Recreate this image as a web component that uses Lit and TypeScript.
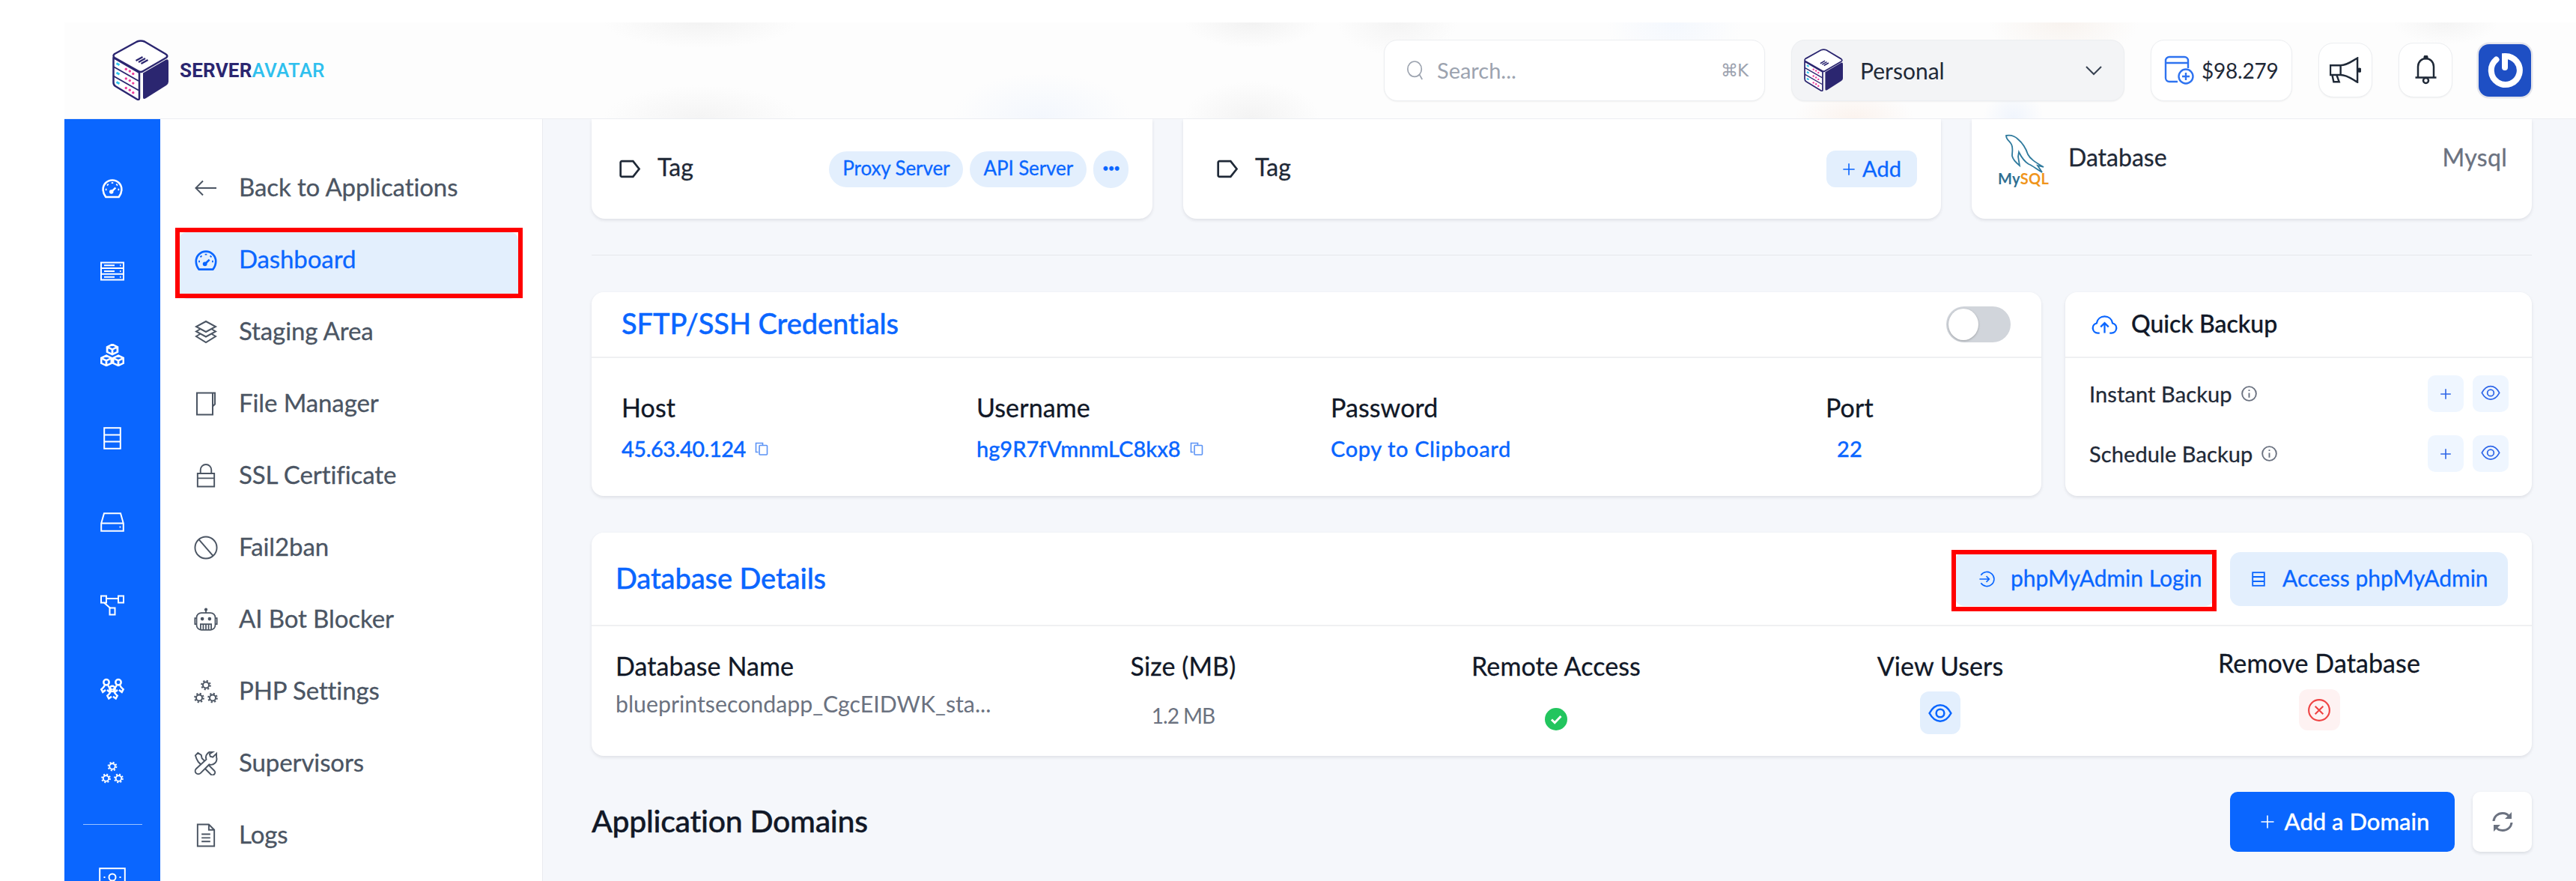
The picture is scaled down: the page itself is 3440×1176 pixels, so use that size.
import { LitElement, html, css, svg, TemplateResult } from "lit";
import { customElement } from "lit/decorators.js";

const hexCube = (c: number, y: number) => svg`
  <path d="M${c} ${y - 5.6}l5 2.8v5.6l-5 2.8-5-2.8v-5.6zM${c - 5} ${y - 2.8}l5 2.8 5-2.8M${c} ${y}v5.6"/>`;

const gear = (x: number, y: number) => svg`
  <circle cx=${x} cy=${y} r="4"/>
  <circle cx=${x} cy=${y} r="5.800" stroke-dasharray="2.200 2.350" stroke-width="2"/>`;

const person = (x: number, y: number) => svg`
  <circle cx=${x} cy=${y} r="3"/>
  <path d="M${x - 2} ${y + 3}c0 2-1.400 2.600-3.400 4.600l1.600 3 3-2.200M${x + 2} ${y + 3}c0 2 1.400 2.600 3.400 4.600l-1.600 3-3-2.200"/>`;

const icons: Record<string, TemplateResult> = {
  gauge: html`<svg viewBox="0 0 24 24" stroke-width="2.200"><path d="M5 21.500h14c1.800-2.200 2.900-5 2.900-8.100A9.900 9.900 0 0 0 2.100 13.400c0 3.100 1.100 5.900 2.900 8.100z"/><path d="M12 5.800v1.400M6.600 8l1 1M17.400 8l-1 1M4.600 13.500H6M18 13.500h1.400M11.500 15.500l4-3.800"/><circle cx="11" cy="16" r="1.200" fill="currentColor"/></svg>`,
  servers: html`<svg viewBox="0 0 32 25"><rect x="1" y="1" width="30" height="23"/><path d="M1 8.600h30M1 16.300h30M5 4.800h14M5 12.400h14M5 20.200h14M26 4.800h1.500M26 12.400h1.500M26 20.200h1.500"/></svg>`,
  cubes: html`<svg viewBox="0.400 0.800 23.200 25" preserveAspectRatio="none" stroke-width="1.500">${hexCube(12, 7)}${hexCube(6.200, 19.400)}${hexCube(17.800, 19.400)}</svg>`,
  rows: html`<svg viewBox="0 0 24 30"><rect x="1.200" y="1.200" width="21.600" height="27.600"/><path d="M1.200 10.400h21.600M1.200 19.600h21.600"/></svg>`,
  drive: html`<svg viewBox="0 0 32 26"><path d="M1.200 14.600 5 1.200h22l3.800 13.400v10.200H1.200zM1.200 14.600h29.600M25.600 19.600h1.600"/></svg>`,
  network: html`<svg viewBox="0 0 32 27"><rect x="1" y="1" width="7" height="9"/><rect x="24" y="1" width="7" height="9"/><rect x="12.500" y="17" width="7" height="9"/><path d="M8 4.500h16M5 10l8.500 7.500"/></svg>`,
  users: html`<svg viewBox="4 0 26 23" stroke-width="1.500">${person(10.500, 4)}${person(23.500, 4)}${person(17, 11)}</svg>`,
  gears: html`<svg viewBox="0 0 32 32" stroke-width="1.700">${gear(16, 7.500)}${gear(7, 24.500)}${gear(25, 24.500)}</svg>`,
  money: html`<svg viewBox="0 0 36 26"><rect x="1.200" y="1.200" width="33.600" height="23.600"/><circle cx="18" cy="13" r="4.500"/><path d="M6.500 13h2M27.500 13h2"/></svg>`,
  back: html`<svg viewBox="0 0 32 24"><path d="M30 12H3M12 2.500 2.500 12l9.500 9.500"/></svg>`,
  layers: html`<svg viewBox="0 0 32 32"><path d="M16 2 29 9l-13 7L3 9zM8 12.500 3 15.500l13 7 13-7-5-3M8 19l-5 3 13 8 13-8-5-3"/></svg>`,
  file: html`<svg viewBox="0 0 28 32"><path d="M2 1.500h24v15l-3 3v11H2zM23 1.500v18"/></svg>`,
  lock: html`<svg viewBox="0 0 26 33"><path d="M1.500 13.500h23v18h-23zM1.500 20h23M5.500 13.500V8.500a7.500 7.500 0 0 1 15 0v5"/></svg>`,
  ban: html`<svg viewBox="0 0 33 33"><circle cx="16.500" cy="16.500" r="15"/><path d="m7 5.500 19 22"/></svg>`,
  robot: html`<svg viewBox="0 0 36 34"><circle cx="18" cy="2" r="1.400" fill="currentColor"/><path d="M18 3v4M4 15H1.500v9H4M32 15h2.500v9H32"/><rect x="4" y="7" width="28" height="25.500" rx="7"/><circle cx="12.500" cy="16" r="1.600" fill="currentColor"/><circle cx="23.500" cy="16" r="1.600" fill="currentColor"/><path d="M10 32.500V24h16v8.500M14 24v8M18 24v8M22 24v8"/></svg>`,
  tools: html`<svg viewBox="0 0 33 33"><path d="M2 5.500 5.500 2l4.500 3 1 4.500 17 17a3.500 3.500 0 0 1-5 5l-17-17L3.500 10z"/><path d="m31 3-5 5-3.500-1-1-3.500 5-3a8 8 0 0 0-9.500 10.500L3 24a4.200 4.200 0 0 0 6 6l12-12a8 8 0 0 0 10-10z" fill="#fff"/></svg>`,
  doc: html`<svg viewBox="0 0 26 33"><path d="M1.500 1.500H17l7.500 7.500v22.500h-23zM17 1.500V9h7.500M7 15h12M7 20h12M7 25h12"/></svg>`,
  search: html`<svg viewBox="0 0 26 30"><ellipse cx="12" cy="13" rx="10" ry="11"/><path d="m19 21 4 7"/></svg>`,
  chevron: html`<svg viewBox="0 0 24 14"><path d="m2 2 10 10L22 2"/></svg>`,
  wallet: html`<svg viewBox="0 0 40 40"><path d="M18 35H7a5 5 0 0 1-5-5V7a5 5 0 0 1 5-5h20a5 5 0 0 1 5 5v10M2 10h30"/><circle cx="29" cy="28" r="9.500"/><path d="M29 23v10M24 28h10"/></svg>`,
  mega: html`<svg viewBox="0 0 43 36"><path d="M1 11.500h14v13H1zM15 11.500c9 0 15-5.500 23-10v33c-8-4.500-14-10-23-10M3.500 24.500l2 9.500h7.500l-3.500-9.500"/><circle cx="40.500" cy="18" r="2" fill="currentColor"/></svg>`,
  bell: html`<svg viewBox="0 0 31 39"><path d="M5 29.500V15a10.500 11 0 0 1 21 0v14.500M1.500 29.500h28"/><circle cx="15.500" cy="33.500" r="3.500"/><circle cx="15.500" cy="2.500" r="1.800" fill="currentColor"/></svg>`,
  tag: html`<svg viewBox="0 0 30 26"><path d="M3.500 2.200H19l8.500 10.800L19 23.800H3.500A1.800 1.800 0 0 1 1.700 22V4a1.800 1.800 0 0 1 1.800-1.800z"/></svg>`,
  copy: html`<svg viewBox="0 0 18 18"><path d="M4.500 13.500H1.500v-12h9v2.500"/><rect x="6" y="4.500" width="10.500" height="12.500" rx="1"/></svg>`,
  info: html`<svg viewBox="0 0 22 22"><circle cx="11" cy="11" r="9.800"/><path d="M11 10v6.500M11 5.500v1.800"/></svg>`,
  plus: html`<svg viewBox="0 0 20 20"><path d="M10 1.500v17M1.500 10h17"/></svg>`,
  eye: html`<svg viewBox="0 0 30 24"><path d="M1.500 12C5 5.500 9.500 2 15 2s10 3.500 13.500 10C25 18.500 20.500 22 15 22S5 18.500 1.500 12z"/><circle cx="15" cy="12" r="5"/></svg>`,
  cloud: html`<svg viewBox="0 0 36 26"><path d="M11 24.500H8.500a7 7 0 0 1-1.500-13.800C8 5 12.500 1.500 18 1.500c5.500 0 10 3.500 11 9.200a7 7 0 0 1-1.500 13.800H25M18 24.500V11M12.500 16l5.500-5.500 5.500 5.500"/></svg>`,
  login: html`<svg viewBox="0 0 24 24"><path d="M3.500 6.500a10 10 0 1 1 0 11M1.500 12H15M11 8l4 4-4 4"/></svg>`,
  stack: html`<svg viewBox="0 0 18 20"><rect x="1.200" y="1.200" width="15.600" height="17.600"/><path d="M1.200 7h15.600M1.200 13h15.600"/></svg>`,
  xcircle: html`<svg viewBox="0 0 30 30"><circle cx="15" cy="15" r="13"/><path d="m10 10 10 10M20 10 10 20"/></svg>`,
  check: html`<svg viewBox="0 0 30 30"><circle class="fill" cx="15" cy="15" r="15"/><path class="tick" d="m9 15.500 4.200 4.200L21.500 11"/></svg>`,
  refresh: html`<svg viewBox="0 0 30 28"><path d="M3 13C3.500 7 8.500 2.500 15 2.500c4 0 7 1.500 9 4.500M27 15c-.5 6-5.500 10.500-12 10.500-4 0-7-1.500-9-4.500"/><path class="solid" d="M27 1v9h-9zM3 27v-9h9z"/></svg>`,
};

const cube = (compact = false) => html`
  <svg class=${compact ? "cube small" : "cube"} viewBox="0 0 75 81" preserveAspectRatio="none">
    <path d="M41 44.500 71 27q4-2 4 2v27q0 3-3 5L45 78q-4 2.500-4-1z" fill="#2b2670"/>
    <path d="M33 2.500q5-2 10 0L71 19q4 2.500 1 5L41 42q-3 2-6 0L3 24q-3-2.500 0-5z" fill="#fff" stroke="#2b2670" stroke-width="2.500" stroke-linejoin="round"/>
    <path d="M1.500 24 36 44v34q0 3-3 1.500L4 62q-2.500-1.500-2.500-5z" fill="#fff" stroke="#2b2670" stroke-width="2.500" stroke-linejoin="round"/>
    <path d="M1.500 36 35 55M1.500 48.500 35 67.500" stroke="#2b2670" stroke-width="2"/>
    <path d="m35 30 9-5M38.500 32l9-5M31.500 28l9-5" stroke="#2b2670" stroke-width="2.200"/>
    <path d="m5.500 31.500 4 2.200M5.500 44l4 2.200M5.500 56.500l4 2.200" stroke="#2fc4ee" stroke-width="3"/>
    <g fill="#ee3f9b">
      <circle cx="18.300" cy="39.300" r="1.700"/><circle cx="23.300" cy="42" r="1.700"/><circle cx="27.800" cy="45.500" r="1.700"/>
      <circle cx="18.300" cy="51.900" r="1.700"/><circle cx="23.300" cy="54.600" r="1.700"/><circle cx="27.800" cy="58.100" r="1.700"/>
      <circle cx="18.300" cy="64.500" r="1.700"/><circle cx="23.300" cy="67.200" r="1.700"/><circle cx="27.800" cy="70.700" r="1.700"/>
    </g>
  </svg>`;

const nav = [
  ["back", "Back to Applications"],
  ["gauge", "Dashboard"],
  ["layers", "Staging Area"],
  ["file", "File Manager"],
  ["lock", "SSL Certificate"],
  ["ban", "Fail2ban"],
  ["robot", "AI Bot Blocker"],
  ["gears", "PHP Settings"],
  ["tools", "Supervisors"],
  ["doc", "Logs"],
];

const rail = ["gauge", "servers", "cubes", "rows", "drive", "network", "users", "gears"];

@customElement("app-root")
export class AppRoot extends LitElement {
  static styles = css`
    :host {
      display: block;
      height: 1176px;
      overflow: hidden;
      background: #fff;
      font-family: "Lato", "Noto Sans", sans-serif;
      color: #111827;
    }
    svg { display: block; fill: none; stroke: currentColor; stroke-width: 2; }
    .page { display: flex; flex-direction: column; height: 1146px; margin: 30px 0 0 86px; }

    .header {
      flex: none;
      box-sizing: border-box;
      height: 129px;
      display: flex;
      align-items: center;
      padding: 0 60px 1px 64px;
      border-bottom: 1px solid #eceef2;
      background:
        radial-gradient(ellipse 130px 34px at 849px 0, #f3f3f3, transparent),
        radial-gradient(ellipse 130px 44px at 849px 128px, #f4f4f4, transparent),
        radial-gradient(ellipse 120px 60px at 1305px 128px, #f3f7fd, transparent),
        radial-gradient(ellipse 90px 34px at 1586px 0, #f2f2f2, transparent),
        radial-gradient(ellipse 90px 50px at 1586px 128px, #f3f3f3, transparent),
        radial-gradient(ellipse 80px 44px at 1780px 0, #f4f4f4, transparent),
        radial-gradient(ellipse 90px 70px at 2150px 0, #f4f8fe, transparent),
        radial-gradient(ellipse 100px 50px at 2670px 0, #f8f3ef, transparent),
        radial-gradient(ellipse 80px 40px at 2390px 128px, #fbf3ee, transparent),
        radial-gradient(ellipse 40px 40px at 2603px 128px, #f0f5fd, transparent),
        radial-gradient(ellipse 70px 30px at 3180px 0, #f4f4f4, transparent),
        #fdfdfd;
    }
    .brand { display: flex; align-items: center; gap: 15px; }
    .cube { width: 75px; height: 81px; stroke: none; flex: none; }
    .cube.small { width: 52px; height: 57px; }
    .word { font-family: "Roboto", sans-serif; font-size: 26px; font-weight: 700; color: #2b2670; letter-spacing: 0.200px; }
    .word span { color: #2fc0ee; font-weight: 500; }
    .tools { margin-left: auto; display: flex; align-items: center; gap: 35px; }
    .box {
      box-sizing: border-box;
      height: 82px;
      display: flex;
      align-items: center;
      background: #fff;
      border: 1px solid #eceef1;
      border-radius: 18px;
      box-shadow: 0 1px 2px rgba(0, 0, 0, 0.05);
    }
    .search { width: 509px; padding: 0 22px 0 29px; color: #9ca3af; font-size: 29px; }
    .search svg { width: 24px; height: 30px; stroke-width: 1.800; margin-right: 17px; }
    .search span:last-child { margin-left: auto; font-size: 23px; font-family: "DejaVu Sans", sans-serif; letter-spacing: -1px; }
    .personal { width: 445px; padding: 0 28px 0 16px; background: #f3f4f6; font-size: 30px; color: #1f2937; }
    .personal .cube { margin-right: 23px; }
    .personal .chev { width: 24px; height: 14px; margin-left: auto; color: #374151; }
    .balance { width: 189px; padding-left: 17px; font-size: 28px; color: #1f2937; gap: 10px; letter-spacing: -0.200px; }
    .balance svg { width: 40px; height: 40px; color: #2f73f0; flex: none; stroke-width: 2.400; }
    .square { width: 72px; height: 73px; justify-content: center; color: #1f2937; border-radius: 20px; }
    .square .mega { width: 42px; height: 36px; }
    .square .bell { width: 31px; height: 39px; }
    .square svg { stroke-width: 2.500; }
    .avatar {
      box-sizing: border-box;
      width: 70px;
      height: 70px;
      border-radius: 14px;
      background: #1e4fc4;
      box-shadow: 0 0 0 2.500px #e4e5ec;
      display: flex;
      align-items: center;
      justify-content: center;
      color: #fff;
    }
    .avatar svg { width: 48px; height: 48px; stroke-width: 8; stroke-linecap: round; }

    .body { flex: 1; display: flex; min-height: 0; }
    .rail {
      flex: none;
      width: 128px;
      padding-top: 36px;
      background: #0a66ff;
      color: #fff;
      display: flex;
      flex-direction: column;
      align-items: center;
      overflow: hidden;
    }
    .cell { flex: none; height: 111.500px; display: flex; align-items: center; justify-content: center; }
    .cell svg { width: 32px; height: 30px; }
    .rail .sep { flex: none; width: 79px; height: 1px; margin-top: 13px; background: #9cc2ff; }
    .rail .money { flex: none; width: 36px; height: 26px; margin-top: 57px; }

    .menu { flex: none; box-sizing: border-box; width: 511px; padding-top: 44px; background: #fff; border-right: 1px solid #e9ebef; }
    .row { position: relative; height: 96px; display: flex; align-items: center; padding-left: 45px; gap: 28px; color: #4b5563; font-size: 33px; letter-spacing: -0.100px; -webkit-text-stroke: 0.300px currentColor; }
    .row svg, .row span { position: relative; }
    .row span { margin-bottom: 4px; }
    .row svg { width: 32px; height: 32px; flex: none; }
    .row.on { color: #0a66ff; }
    .row .fillbg { position: absolute; left: 25px; right: 32px; top: 11px; bottom: -4px; background: #e3effd; border-radius: 10px; }
    .row .mark { position: absolute; left: 20px; right: 26px; top: 5px; bottom: -3px; border: 6px solid #ff0000; box-sizing: border-box; }

    .main { flex: 1; min-width: 0; padding: 0 59px 0 65px; background: #f5f7fb; overflow: hidden; }
    .card { background: #fff; border-radius: 16px; box-shadow: 0 2px 4px rgba(17, 24, 39, 0.1); }
    .top { display: grid; grid-template-columns: 749fr 1012fr 748fr; gap: 41px; height: 133px; }
    .top .card { border-radius: 0 0 18px 18px; display: flex; align-items: center; font-size: 32px; color: #1f2937; -webkit-text-stroke: 0.300px currentColor; }
    .tagcard { padding: 0 32px 0 37px; }
    .tagcard.second { padding-left: 45px; }
    .tagcard svg { width: 29px; height: 25px; stroke-width: 2.800; margin-right: 22px; color: #1f2937; }
    .tagcard > span { margin-bottom: 6px; }
    .chips { margin-left: auto; display: flex; align-items: center; gap: 9px; }
    .chip { box-sizing: border-box; height: 48px; display: flex; align-items: center; padding: 0 18px 3px; border-radius: 24px; background: #e3effd; color: #0a66ff; font-size: 26px; letter-spacing: -0.100px; }
    .chip.more { width: 47px; height: 50px; padding: 0 0 4px; justify-content: center; letter-spacing: -1px; font-size: 15px; }
    .add { margin-left: auto; width: 121px; height: 49px; box-sizing: border-box; display: flex; align-items: center; justify-content: center; gap: 9px; border-radius: 12px; background: #e3effd; color: #0a66ff; font-size: 29px; }
    .add span { margin-bottom: 3px; }
    .tagcard .add svg { width: 18px; height: 18px; margin: 0; color: #0a66ff; stroke-width: 1.800; }
    .top .dbcard { align-items: flex-start; padding: 20px 33px 0 35px; }
    .mysql { width: 65px; height: 65px; margin-right: 29px; flex: none; }
    .mysql svg { width: 55px; height: 52px; stroke-width: 1.800; color: #2f7a9d; margin-left: 9px; }
    .mysql div { font-size: 20px; font-weight: 700; line-height: 15px; letter-spacing: 0.300px; color: #2f6f92; white-space: nowrap; -webkit-text-stroke: 0; }
    .mysql div b { color: #f0951c; font-weight: 700; }
    .dbline { flex: 1; height: 65px; display: flex; align-items: center; justify-content: space-between; }
    .dbline span { margin-bottom: 4px; }
    .dbline span:last-child { color: #6b7280; letter-spacing: 0.300px; }

    hr { margin: 48px 0 49px; border: 0; height: 1px; background: #e5e7eb; }

    .split { display: flex; gap: 32px; margin-bottom: 49px; }
    .sftp { flex: none; width: 1936px; height: 272px; }
    .quick { flex: 1; height: 272px; }
    .head { box-sizing: border-box; height: 88px; display: flex; align-items: center; border-bottom: 2px solid #eff0f2; padding: 0 41px 0 40px; }
    .title { font-size: 38px; font-weight: 500; color: #0a66ff; letter-spacing: -0.100px; margin-bottom: 4px; -webkit-text-stroke: 0.400px currentColor; }
    .switch { margin-left: auto; width: 86px; height: 48px; box-sizing: border-box; padding: 3px; border-radius: 24px; background: #d1d5db; }
    .knob { width: 40px; height: 42px; border-radius: 50%; background: #fff; box-shadow: 0 1px 3px rgba(0, 0, 0, 0.25); }
    .creds { display: grid; grid-template-columns: 474px 473px 661px auto; padding: 46px 0 0 40px; justify-content: start; }
    .lab { font-size: 34px; line-height: 40px; color: #111827; letter-spacing: 0.100px; -webkit-text-stroke: 0.300px currentColor; }
    .val { display: flex; align-items: center; gap: 12px; margin-top: 15px; font-size: 29px; line-height: 40px; color: #0a66ff; font-weight: 500; -webkit-text-stroke: 0.300px currentColor; }
    .val svg { width: 18px; height: 18px; color: #5b93f5; stroke-width: 1.600; }
    .val.host { letter-spacing: -0.500px; }
    .val.clip { letter-spacing: 0.600px; }
    .val.port { justify-content: center; }

    .quick .head { padding-left: 35px; gap: 18px; font-size: 32px; font-weight: 500; color: #111827; -webkit-text-stroke: 0.300px currentColor; }
    .quick .head span { margin-bottom: 4px; }
    .quick .head svg { width: 35px; height: 25px; color: #0a66ff; stroke-width: 2.400; }
    .qbody { padding: 23px 31px 0 32px; display: flex; flex-direction: column; gap: 31px; }
    .qrow { display: flex; align-items: center; gap: 12px; font-size: 29px; color: #1f2937; letter-spacing: 0.100px; -webkit-text-stroke: 0.300px currentColor; }
    .qrow .inf { width: 21px; height: 21px; color: #6b7280; stroke-width: 1.400; }
    .qbtn { width: 48px; height: 49px; display: flex; align-items: center; justify-content: center; border-radius: 10px; background: #eff6ff; color: #2f66e8; }
    .qbtn:nth-of-type(1) { margin-left: auto; }
    .qbtn .p { width: 16px; height: 16px; stroke-width: 2.200; }
    .qbtn .e { width: 26px; height: 24px; stroke-width: 2.200; }

    .db { height: 298px; }
    .dbhead { box-sizing: border-box; height: 125px; display: flex; align-items: center; padding: 0 32px; border-bottom: 2px solid #eff0f2; gap: 20px; }
    .dbhead .title { margin-right: auto; }
    .act { position: relative; box-sizing: border-box; height: 72px; display: flex; align-items: center; border-radius: 14px; background: #e3effd; color: #0a66ff; font-size: 30px; -webkit-text-stroke: 0.300px currentColor; }
    .act span { margin-bottom: 4px; }
    .act.login { width: 348px; padding-left: 32px; gap: 20px; }
    .act.login svg { width: 23px; height: 24px; stroke-width: 1.700; flex: none; }
    .act.access { width: 371px; padding-left: 29px; gap: 23px; }
    .act.access svg { width: 18px; height: 20px; stroke-width: 1.800; flex: none; }
    .act .mark { position: absolute; left: -4px; right: -2px; top: -3px; bottom: -7px; border: 6px solid #ff0000; box-sizing: border-box; }
    .dbgrid { display: grid; grid-template-columns: 551px 414px 582px 444px 568px; padding: 33px 0 0 32px; }
    .col { display: flex; flex-direction: column; align-items: center; }
    .col.left { align-items: flex-start; }
    .dimval { font-size: 30.300px; line-height: 40px; color: #6b7280; margin-top: 10px; }
    .dimval.size { margin-top: 26px; font-size: 28px; letter-spacing: -1px; }
    .ok { width: 30px; height: 30px; margin-top: 36px; }
    .ok .fill { fill: #22c55e; stroke: none; }
    .ok .tick { stroke: #fff; stroke-width: 3; }
    .ico { width: 54px; height: 57px; margin-top: 14px; display: flex; align-items: center; justify-content: center; border-radius: 12px; background: #e3effd; color: #0a66ff; }
    .ico svg { width: 32px; height: 26px; stroke-width: 2.400; }
    .col.rm .lab { margin-top: -4px; }
    .ico.red { width: 55px; height: 55px; margin-top: 15px; background: #fef2f2; color: #ef4444; }
    .ico.red svg { width: 32px; height: 32px; stroke-width: 2; }

    .domains { display: flex; align-items: center; gap: 24px; margin-top: 48px; }
    .domains h2 { margin: 0 auto 4px 0; font-size: 41px; font-weight: 500; color: #111827; letter-spacing: -0.300px; -webkit-text-stroke: 0.400px currentColor; }
    .primary { box-sizing: border-box; width: 300px; height: 80px; display: flex; align-items: center; justify-content: center; gap: 13px; border-radius: 10px; background: #0a66ff; color: #fff; font-size: 31px; font-weight: 500; padding-left: 6px; -webkit-text-stroke: 0.300px currentColor; }
    .primary span { margin-bottom: 3px; }
    .primary svg { width: 20px; height: 20px; stroke-width: 1.600; }
    .refresh { width: 79px; height: 80px; display: flex; align-items: center; justify-content: center; background: #fff; border-radius: 10px; box-shadow: 0 2px 4px rgba(17, 24, 39, 0.12); color: #6b7280; }
    .refresh svg { width: 30px; height: 28px; stroke-width: 3; }
    .refresh .solid { fill: currentColor; stroke: none; }
    .foot { height: 1px; margin: 39px 10px 0; background: #e5e7eb; }
  `;

  private row(icon: string, label: string) {
    const on = label === "Dashboard";
    return html`<div class=${on ? "row on" : "row"}>
      ${on ? html`<div class="fillbg"></div>` : ""}
      ${icons[icon]}<span>${label}</span>
      ${on ? html`<div class="mark"></div>` : ""}
    </div>`;
  }

  render() {
    return html`<div class="page">
      <header class="header">
        <div class="brand">${cube()}<div class="word">SERVER<span>AVATAR</span></div></div>
        <div class="tools">
          <div class="box search">${icons.search}<span>Search...</span><span>⌘K</span></div>
          <div class="box personal">${cube(true)}<span>Personal</span><span class="chev">${icons.chevron}</span></div>
          <div class="box balance">${icons.wallet}<span>$98.279</span></div>
          <div class="box square"><span class="mega">${icons.mega}</span></div>
          <div class="box square"><span class="bell">${icons.bell}</span></div>
          <div class="avatar"><svg viewBox="0 0 48 48"><path d="M12.500 9.500A19 19 0 1 0 24 5v15"/></svg></div>
        </div>
      </header>
      <div class="body">
        <aside class="rail">
          ${rail.map((n) => html`<div class="cell">${icons[n]}</div>`)}
          <div class="sep"></div>
          <div class="money">${icons.money}</div>
        </aside>
        <nav class="menu">${nav.map(([i, l]) => this.row(i, l))}</nav>
        <main class="main">
          <section class="top">
            <div class="card tagcard">
              ${icons.tag}<span>Tag</span>
              <div class="chips">
                <div class="chip">Proxy Server</div>
                <div class="chip">API Server</div>
                <div class="chip more">•••</div>
              </div>
            </div>
            <div class="card tagcard second">
              ${icons.tag}<span>Tag</span>
              <div class="add">${icons.plus}<span>Add</span></div>
            </div>
            <div class="card dbcard">
              <div class="mysql">
                <svg viewBox="0 0 55 52"><path d="M2 2C8 1 14 3 18 7c6 5 10 11 13 20 3 6 9 10 21 17l-8-2 6 9c-7-4-13-9-18-11-5-3-10-10-13-16l-1 6 2 12c-5-4-9-8-10-13 0-7 2-12-2-17-2-3-6-5-6-10z"/></svg>
                <div>My<b>SQL</b></div>
              </div>
              <div class="dbline"><span>Database</span><span>Mysql</span></div>
            </div>
          </section>
          <hr />
          <section class="split">
            <div class="card sftp">
              <div class="head"><span class="title">SFTP/SSH Credentials</span><div class="switch"><div class="knob"></div></div></div>
              <div class="creds">
                <div><div class="lab">Host</div><div class="val host">45.63.40.124 ${icons.copy}</div></div>
                <div><div class="lab">Username</div><div class="val">hg9R7fVmnmLC8kx8 ${icons.copy}</div></div>
                <div><div class="lab">Password</div><div class="val clip">Copy to Clipboard</div></div>
                <div><div class="lab">Port</div><div class="val port">22</div></div>
              </div>
            </div>
            <div class="card quick">
              <div class="head">${icons.cloud}<span>Quick Backup</span></div>
              <div class="qbody">
                ${["Instant Backup", "Schedule Backup"].map((t) => html`<div class="qrow">
                  <span>${t}</span><span class="inf">${icons.info}</span>
                  <div class="qbtn"><span class="p">${icons.plus}</span></div>
                  <div class="qbtn"><span class="e">${icons.eye}</span></div>
                </div>`)}
              </div>
            </div>
          </section>
          <section class="card db">
            <div class="dbhead">
              <span class="title">Database Details</span>
              <div class="act login">${icons.login}<span>phpMyAdmin Login</span><div class="mark"></div></div>
              <div class="act access">${icons.stack}<span>Access phpMyAdmin</span></div>
            </div>
            <div class="dbgrid">
              <div class="col left"><div class="lab">Database Name</div><div class="dimval">blueprintsecondapp_CgcEIDWK_sta...</div></div>
              <div class="col"><div class="lab">Size (MB)</div><div class="dimval size">1.2 MB</div></div>
              <div class="col"><div class="lab">Remote Access</div><div class="ok">${icons.check}</div></div>
              <div class="col"><div class="lab">View Users</div><div class="ico">${icons.eye}</div></div>
              <div class="col rm"><div class="lab">Remove Database</div><div class="ico red">${icons.xcircle}</div></div>
            </div>
          </section>
          <section class="domains">
            <h2>Application Domains</h2>
            <div class="primary">${icons.plus}<span>Add a Domain</span></div>
            <div class="refresh">${icons.refresh}</div>
          </section>
          <div class="foot"></div>
        </main>
      </div>
    </div>`;
  }
}
